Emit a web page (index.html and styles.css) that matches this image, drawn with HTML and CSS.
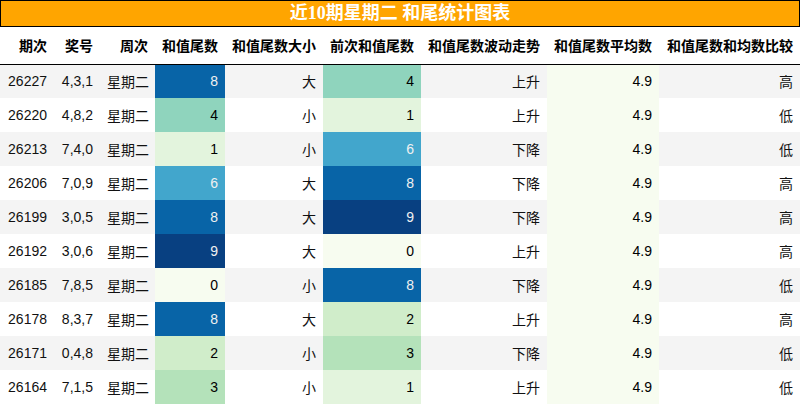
FILE: index.html
```html
<!DOCTYPE html>
<html lang="zh">
<head>
<meta charset="utf-8">
<link rel="stylesheet" href="styles.css">
</head>
<body>
<div class="title">近10期星期二 和尾统计图表</div>
<table class="grid">
<colgroup>
<col class="c1"><col class="c2"><col class="c3"><col class="c4"><col class="c5"><col class="c6"><col class="c7"><col class="c8"><col class="c9">
</colgroup>
<thead>
<tr><th>期次</th><th>奖号</th><th>周次</th><th>和值尾数</th><th>和值尾数大小</th><th>前次和值尾数</th><th>和值尾数波动走势</th><th>和值尾数平均数</th><th>和值尾数和均数比较</th></tr>
</thead>
<tbody>
<tr><td>26227</td><td>4,3,1</td><td>星期二</td><td class="v8">8</td><td>大</td><td class="v4">4</td><td>上升</td><td class="avg">4.9</td><td>高</td></tr>
<tr><td>26220</td><td>4,8,2</td><td>星期二</td><td class="v4">4</td><td>小</td><td class="v1">1</td><td>上升</td><td class="avg">4.9</td><td>低</td></tr>
<tr><td>26213</td><td>7,4,0</td><td>星期二</td><td class="v1">1</td><td>小</td><td class="v6">6</td><td>下降</td><td class="avg">4.9</td><td>低</td></tr>
<tr><td>26206</td><td>7,0,9</td><td>星期二</td><td class="v6">6</td><td>大</td><td class="v8">8</td><td>下降</td><td class="avg">4.9</td><td>高</td></tr>
<tr><td>26199</td><td>3,0,5</td><td>星期二</td><td class="v8">8</td><td>大</td><td class="v9">9</td><td>下降</td><td class="avg">4.9</td><td>高</td></tr>
<tr><td>26192</td><td>3,0,6</td><td>星期二</td><td class="v9">9</td><td>大</td><td class="v0">0</td><td>上升</td><td class="avg">4.9</td><td>高</td></tr>
<tr><td>26185</td><td>7,8,5</td><td>星期二</td><td class="v0">0</td><td>小</td><td class="v8">8</td><td>下降</td><td class="avg">4.9</td><td>低</td></tr>
<tr><td>26178</td><td>8,3,7</td><td>星期二</td><td class="v8">8</td><td>大</td><td class="v2">2</td><td>上升</td><td class="avg">4.9</td><td>高</td></tr>
<tr><td>26171</td><td>0,4,8</td><td>星期二</td><td class="v2">2</td><td>小</td><td class="v3">3</td><td>下降</td><td class="avg">4.9</td><td>低</td></tr>
<tr><td>26164</td><td>7,1,5</td><td>星期二</td><td class="v3">3</td><td>小</td><td class="v1">1</td><td>上升</td><td class="avg">4.9</td><td>低</td></tr>
</tbody>
</table>
</body>
</html>
```
FILE: styles.css
```css
html, body {
  margin: 0;
  padding: 0;
  background: #ffffff;
}
body {
  width: 800px;
  font-family: "Liberation Sans", "Noto Sans CJK SC", sans-serif;
}
.title {
  box-sizing: border-box;
  width: 800px;
  height: 27px;
  border: 1px solid #000;
  background: #ffa500;
  color: #fff;
  font-family: "Liberation Serif", "Noto Sans CJK SC", serif;
  font-weight: bold;
  font-size: 18px;
  line-height: 25px;
  text-align: center;
}
.grid {
  width: 800px;
  border-collapse: collapse;
  table-layout: fixed;
  font-size: 14px;
  color: #111;
}
.c1 { width: 54px; }
.c2 { width: 46px; }
.c3 { width: 55px; }
.c4 { width: 70px; }
.c5 { width: 98px; }
.c6 { width: 98px; }
.c7 { width: 126px; }
.c8 { width: 112px; }
.c9 { width: 141px; }
.grid th {
  height: 37px;
  padding: 0 7px;
  text-align: right;
  font-weight: bold;
  color: #000;
  border-bottom: 1px solid #000;
  white-space: nowrap;
  box-sizing: border-box;
}
.grid td {
  height: 34px;
  padding: 0 7px;
  text-align: right;
  white-space: nowrap;
  box-sizing: border-box;
}
.grid tbody tr:nth-child(odd) { background: #f4f4f4; }
.grid tbody tr:nth-child(even) { background: #ffffff; }
.grid td.v0 { background: #f7fcf0; color: #000; }
.grid td.v1 { background: #e3f4dd; color: #000; }
.grid td.v2 { background: #d0edca; color: #000; }
.grid td.v3 { background: #b4e2ba; color: #000; }
.grid td.v4 { background: #8fd4bd; color: #000; }
.grid td.v6 { background: #42a6cc; color: #f1f1f1; }
.grid td.v8 { background: #0864a7; color: #f1f1f1; }
.grid td.v9 { background: #084081; color: #f1f1f1; }
.grid td.avg { background: #f7fcf0; color: #000; }
```
